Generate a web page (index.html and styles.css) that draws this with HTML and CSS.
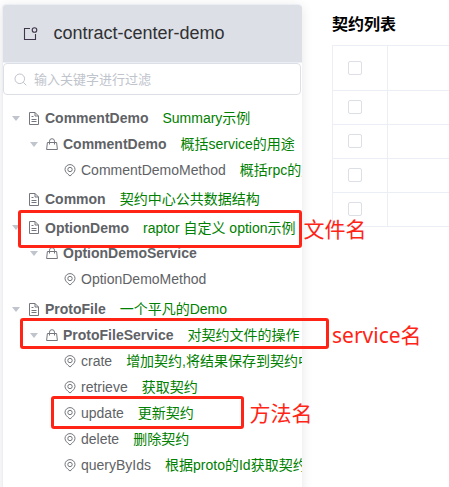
FILE: index.html
```html
<!DOCTYPE html>
<html lang="zh-CN">
<head>
<meta charset="utf-8">
<title>contract-center-demo</title>
<link rel="stylesheet" href="styles.css">
</head>
<body>
<svg class="defs" width="0" height="0">
  <symbol id="doc" viewBox="0 0 12 13"><path d="M1.500 .5H7L10.500 4v8.500h-9zM7 .5V4h3.500M3.500 4.500h2M3.500 7.500h5M3.500 9.500h5"/></symbol>
  <symbol id="bag" viewBox="0 0 12 13"><path d="M1.400 4.500h9.200l.8 7H.6zM3.500 6.500V3.200a2.500 2.500 0 0 1 5 0v3.300"/></symbol>
  <symbol id="pin" viewBox="0 0 12 13"><path d="M6 12C3.200 9.700 1 7.800 1 5.400a5 4.800 0 0 1 10 0c0 2.400-2.200 4.300-5 6.600z"/><circle cx="6" cy="5.500" r="2.200"/></symbol>
</svg>
<div class="page">
  <aside class="card">
    <header class="card-head">
      <svg class="head-icon" viewBox="0 0 15 14"><path d="M7 1.500H1.500v11h11V7"/><circle cx="11.500" cy="3" r="2.300"/></svg>
      <h1>contract-center-demo</h1>
    </header>
    <div class="search">
      <svg viewBox="0 0 13 13"><circle cx="5.800" cy="5.800" r="4.800"/><path d="M9.300 9.300l3 3"/></svg>
      <span>输入关键字进行过滤</span>
    </div>
    <div class="tree">
      <section class="group">
        <div class="row file"><i class="caret"></i><svg><use href="#doc"/></svg><b>CommentDemo</b><em>Summary示例</em></div>
        <div class="row service"><i class="caret"></i><svg><use href="#bag"/></svg><b>CommentDemo</b><em>概括service的用途</em></div>
        <div class="row method"><svg><use href="#pin"/></svg><span>CommentDemoMethod</span><em>概括rpc的用途</em></div>
      </section>
      <section class="group">
        <div class="row file"><i class="caret none"></i><svg><use href="#doc"/></svg><b>Common</b><em>契约中心公共数据结构</em></div>
      </section>
      <section class="group">
        <div class="row file"><i class="caret"></i><svg><use href="#doc"/></svg><b>OptionDemo</b><em>raptor 自定义 option示例</em></div>
        <div class="row service"><i class="caret"></i><svg><use href="#bag"/></svg><b>OptionDemoService</b></div>
        <div class="row method"><svg><use href="#pin"/></svg><span>OptionDemoMethod</span></div>
      </section>
      <section class="group">
        <div class="row file"><i class="caret"></i><svg><use href="#doc"/></svg><b>ProtoFile</b><em>一个平凡的Demo</em></div>
        <div class="row service"><i class="caret"></i><svg><use href="#bag"/></svg><b>ProtoFileService</b><em>对契约文件的操作</em></div>
        <div class="row method"><svg><use href="#pin"/></svg><span>crate</span><em>增加契约,将结果保存到契约中心</em></div>
        <div class="row method"><svg><use href="#pin"/></svg><span>retrieve</span><em>获取契约</em></div>
        <div class="row method"><svg><use href="#pin"/></svg><span>update</span><em>更新契约</em></div>
        <div class="row method"><svg><use href="#pin"/></svg><span>delete</span><em>删除契约</em></div>
        <div class="row method"><svg><use href="#pin"/></svg><span>queryByIds</span><em>根据proto的Id获取契约</em></div>
      </section>
    </div>
  </aside>
  <main class="list">
    <h2>契约列表</h2>
    <div class="table">
      <div class="tr head"><div class="td"><i class="check"></i></div></div>
      <div class="tr"><div class="td"><i class="check"></i></div></div>
      <div class="tr"><div class="td"><i class="check"></i></div></div>
      <div class="tr"><div class="td"><i class="check"></i></div></div>
      <div class="tr"><div class="td"><i class="check"></i></div></div>
    </div>
  </main>
  <div class="mark mark-file"></div><div class="note note-file">文件名</div>
  <div class="mark mark-service"></div><div class="note note-service"><span class="latin">service</span>名</div>
  <div class="mark mark-method"></div><div class="note note-method">方法名</div>
</div>
</body>
</html>
```
FILE: styles.css
```css
* { box-sizing: border-box; }
body { margin: 0; background: #fff; font-family: "Liberation Sans", "Noto Sans CJK SC", sans-serif; font-size: 14px; color: #606266; }
.defs { display: block; position: absolute; }
.page { position: relative; display: flex; width: 449px; height: 487px; overflow: hidden; }
.card { width: 300px; height: 520px; margin: 4px 0 0 2px; flex: none; border: 1px solid #ebeef5; border-right: 0; border-radius: 4px; box-shadow: 0 2px 12px rgba(0,0,0,.1); overflow: hidden; }
.card-head { height: 58px; background: #dcdfe6; display: flex; align-items: center; padding-left: 20px; border-bottom: 1px solid #ebeef5; }
.head-icon { width: 15px; height: 14px; fill: none; stroke: #40364b; stroke-width: 1.1; }
h1 { margin: -2px 0 0 15.5px; font-size: 18px; line-height: 24px; font-weight: 400; color: #303133; white-space: nowrap; }
.search { height: 32px; margin-right: 1px; border: 1px solid #dcdfe6; border-radius: 4px; display: flex; align-items: center; padding-left: 10px; color: #c0c4cc; font-size: 13px; }
.search span { margin-top: -2px; }
.search svg { width: 13px; height: 13px; margin-right: 7px; fill: none; stroke: #c0c4cc; }
.tree { padding-top: 10px; }
.group { margin-bottom: 3.2px; }
.row { height: 26px; display: flex; align-items: center; white-space: nowrap; line-height: 20px; }
.group:nth-child(3) .file { height: 25px; }
.group:nth-child(3) { margin-bottom: 4px; }
.row svg { width: 12px; height: 13px; flex: none; fill: none; stroke: #73767c; stroke-width: 1; margin-right: 5px; }
.row em { font-style: normal; color: #008000; margin-left: 14px; }
.row b { font-weight: 700; }
.file { padding-left: 9px; }
.service { padding-left: 27px; }
.method { padding-left: 61px; }
.caret { width: 0; height: 0; border: 4px solid transparent; border-top: 5px solid #c0c4cc; border-bottom: 0; margin-right: 8px; flex: none; }
.caret.none { visibility: hidden; }
.list { margin-left: 30px; flex: 1; }
h2 { margin: 13px 0 0; height: 32px; font-size: 16px; line-height: 24px; color: #000; font-weight: 700; }
.table { border: 1px solid #ebeef5; border-right: 0; }
.tr { height: 34px; border-bottom: 1px solid #ebeef5; }
.tr.head { height: 45px; }
.td { width: 55px; height: 100%; border-right: 1px solid #ebeef5; display: flex; align-items: center; padding: 0 0 1px 15px; }
.tr:last-child { height: 33px; border-bottom: 0; }
.check { width: 14px; height: 14px; border: 1px solid #dcdfe6; border-radius: 2px; }
.mark { position: absolute; border: 3px solid #ff2415; border-radius: 3px; }
.mark-file { left: 18px; top: 210px; width: 284px; height: 38px; }
.mark-service { left: 20px; top: 318px; width: 309px; height: 31px; }
.mark-method { left: 51px; top: 396px; width: 193px; height: 33px; }
.note { position: absolute; color: #ff2415; font: 400 21px/28px "Noto Sans CJK SC", sans-serif; white-space: nowrap; }
.note-file { left: 303.5px; top: 214px; }
.note-service { left: 332px; top: 320px; }
.note-method { left: 249.5px; top: 398px; }
.latin { font-family: "Noto Sans", sans-serif; }
```
